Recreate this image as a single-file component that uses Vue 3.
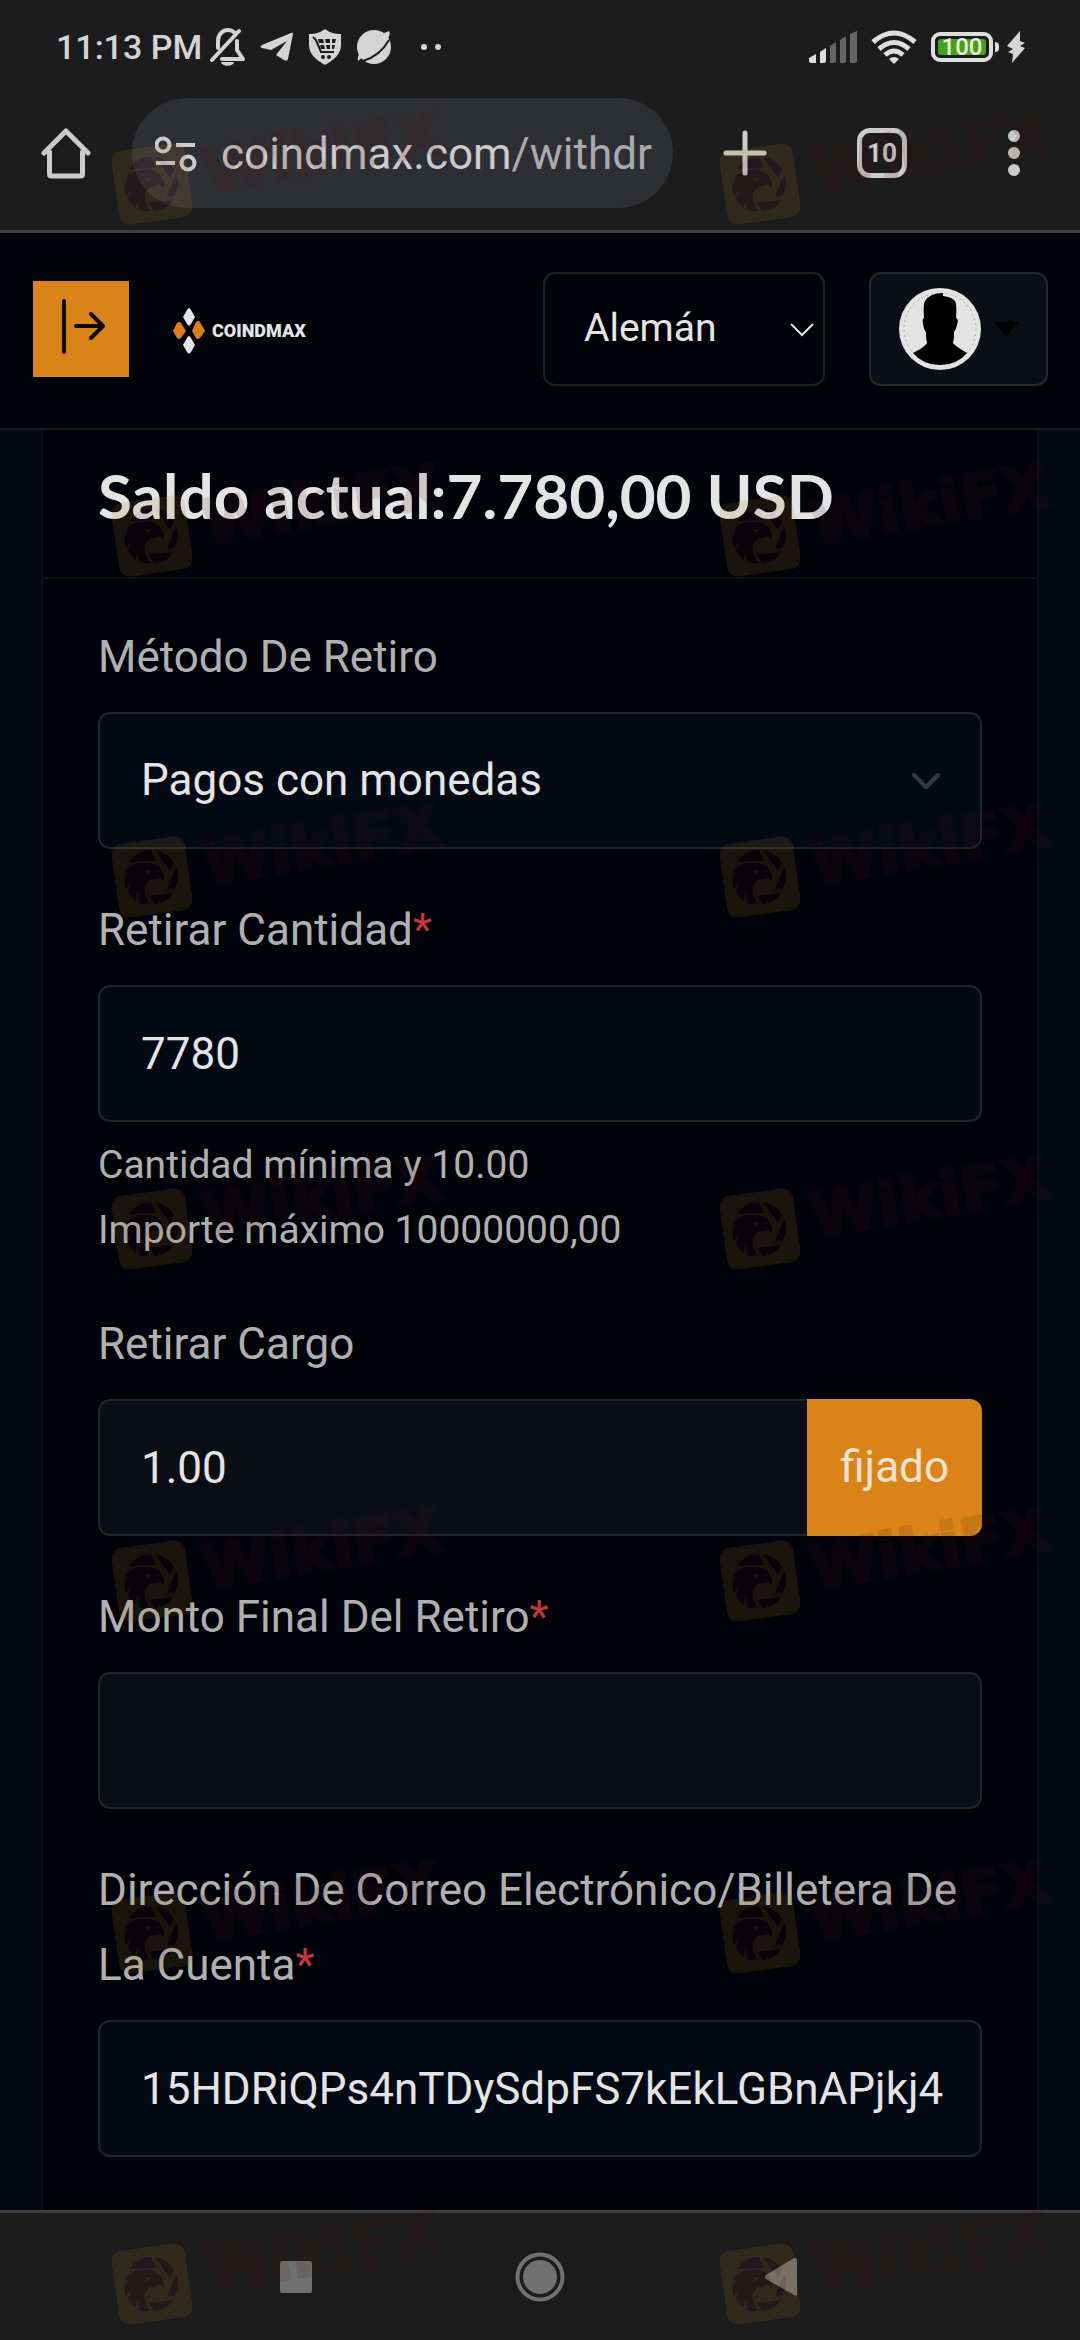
<script setup>
import { ref } from 'vue'

const language = ref('Alemán')
const method = ref('Pagos con monedas')
const amount = ref('7780')
const charge = ref('1.00')
const finalAmount = ref('')
const address = ref('15HDRiQPs4nTDySdpFS7kEkLGBnAPjkj4')

const stamps = [110, 462, 803, 1155, 1507, 1859, 2210].flatMap((y) => [
  { x: 112, y },
  { x: 720, y },
])
</script>

<template>
  <div class="screen">
    <div class="status">
      <span class="clock">11:13 PM</span>
      <svg class="s-bell" width="36" height="38" viewBox="0 0 36 38" fill="none" stroke="#d4d4d4" stroke-width="4" stroke-linecap="round" stroke-linejoin="round">
        <path d="M2 32 29 3" />
        <path d="M8 20V13C8 6 13 2 18 2c3 0 5 1 7 3M27 13v9l6 9H12" />
        <path d="M11 34h13c-1 5-12 5-13 0z" fill="#d4d4d4" stroke="none" />
      </svg>
      <svg width="34" height="30" viewBox="0 0 34 30"><path d="M2 13 31 1q2-1 2 1l-5 25q-1 3-4 1l-8-5 11-14L11 18 2 16q-3-1 0-3z" fill="#d4d4d4" /></svg>
      <svg width="34" height="38" viewBox="0 0 34 38">
        <path d="M17 1c5 4 10 5 16 5v11c0 9-7 15-16 20C8 32 1 26 1 17V6C7 6 12 5 17 1z" fill="#d4d4d4" />
        <path d="M5 9l3 3 5 12h13" fill="none" stroke="#1c1c1c" stroke-width="2" />
        <path d="M10 11h5l1 4h-5zM17 11h5v4h-4zM24 11h4l-1 4h-3zM12 17h4l1 4h-4zM18 17h4v4h-3zM24 17h3l-1 4h-2z" fill="#1c1c1c" />
        <circle cx="15" cy="29" r="2" fill="#1c1c1c" /><circle cx="21" cy="29" r="2" fill="#1c1c1c" />
      </svg>
      <svg width="36" height="38" viewBox="0 0 36 38">
        <circle cx="18" cy="19" r="17" fill="#d4d4d4" />
        <path d="M26 6 33 3q2 3-2 9zM8 28l-6 5q-1-4 2-9z" fill="#d4d4d4" />
        <path d="M33 12Q24 28 7 33" fill="none" stroke="#1c1c1c" stroke-width="2" />
      </svg>
      <svg class="s-more" width="22" height="8" viewBox="0 0 22 8" fill="#d4d4d4"><circle cx="4" cy="4" r="3" /><circle cx="18" cy="4" r="3" /></svg>
      <span class="spring"></span>
      <svg width="48" height="32" viewBox="0 0 48 32">
        <path d="M0 27l7-4v9H2q-2 0-2-2zM11 21l6-4v13q0 2-2 2h-4z" fill="#dedede" />
        <path d="M21 15l6-4v19q0 2-2 2h-4zM31 9l6-4v25q0 2-2 2h-4zM41 3l7-3v30q0 2-2 2h-5z" fill="#666" />
      </svg>
      <svg width="46" height="34" viewBox="0 0 46 34" fill="none" stroke="#dedede" stroke-width="5">
        <path d="M2 12Q23-6 44 12M8 19q15-13 30 0M14 25q9-8 18 0" />
        <path d="M18 29q5-4 10 0l-5 5z" fill="#dedede" stroke="none" />
      </svg>
      <div class="power">
        <span class="battery"><span class="level">100</span></span>
        <span class="cap"></span>
        <svg width="18" height="32" viewBox="0 0 18 32"><path d="M13 0 0 15l6 3-5 3 5 2-1 9 13-15-5-2 5-3-5-2z" fill="#d4d4d4" /></svg>
      </div>
    </div>

    <div class="toolbar">
      <button class="icon" aria-label="Inicio">
        <svg width="50" height="52" viewBox="0 0 50 52" fill="none" stroke="#cbcbcb" stroke-width="5" stroke-linecap="round" stroke-linejoin="round"><path d="M3 26 25 4 47 26M8.500 25v22q0 2 2 2h29q2 0 2-2V25" /></svg>
      </button>
      <button class="url">
        <svg width="42" height="36" viewBox="0 0 42 36" fill="none" stroke="#cbcbcb" stroke-width="4"><circle cx="8" cy="9" r="6.500" /><path d="M21 9h19M1 27h19" /><circle cx="33" cy="27" r="6.500" /></svg>
        <span>coindmax.com<span class="path">/withdr</span></span>
      </button>
      <button class="icon" aria-label="Nueva pestaña">
        <svg width="44" height="46" viewBox="0 0 44 46" stroke="#cbcbcb" stroke-width="5" stroke-linecap="round"><path d="M22 3v40M3 23h38" /></svg>
      </button>
      <button class="tabs">10</button>
      <button class="icon" aria-label="Menú">
        <svg width="12" height="46" viewBox="0 0 12 46" fill="#cbcbcb"><circle cx="6" cy="6" r="6" /><circle cx="6" cy="23" r="6" /><circle cx="6" cy="40" r="6" /></svg>
      </button>
    </div>

    <header class="site">
      <button class="side" aria-label="Abrir menú">
        <svg width="96" height="96" viewBox="0 0 96 96" fill="none" stroke="#0b0705" stroke-width="4" stroke-linecap="round" stroke-linejoin="round"><path d="M31 20v51M43 45h27M58 33l12 12-12 12" /></svg>
      </button>
      <a class="brand" href="#">
        <svg width="32" height="46" viewBox="0 0 32 46">
          <path d="M16 0q1 0 2 2l4 7-4 7q-2 3-4 0l-4-7 4-7q1-2 2-2zM16 28q1 0 2 2l4 7-4 7q-2 3-4 0l-4-7 4-7q1-2 2-2z" fill="#e2e4e8" />
          <path d="M6 14q1 0 2 1l5 8-5 7q-2 2-4 0l-4-7 4-8q1-1 2-1zM25 13q1 0 2 1l5 9-5 7q-2 2-4 0l-4-7 4-9q1-1 2-1z" fill="#df7d1b" />
        </svg>
        <span>COINDMAX</span>
      </a>
      <div class="lang">
        <select v-model="language" aria-label="Idioma"><option>Alemán</option></select>
        <svg width="24" height="14" viewBox="0 0 24 14" fill="none" stroke="#e4e4e4" stroke-width="2"><path d="M1 1l11 11L23 1" /></svg>
      </div>
      <button class="user" aria-label="Cuenta">
        <svg width="82" height="82" viewBox="0 0 82 82">
          <circle cx="41" cy="41" r="41" fill="#e3e3e3" />
          <circle cx="41" cy="41" r="36" fill="none" stroke="#aaa" stroke-width="1" stroke-dasharray="2 3" />
          <path d="M44 5v3q9 1 12 5 2 3 1 17 3 1 1 7-1 5-3 7v5l-1 6q2 3 14 10Q58 77 41 77T14 65q12-6 14-10l-1-6v-5q-2-2-3-8-1-5 1-6-1-14 1-17 5-8 18-8z" fill="#000" />
        </svg>
        <svg width="26" height="14" viewBox="0 0 26 14"><path d="M0 0h26L13 14z" fill="#000" /></svg>
      </button>
    </header>

    <main>
      <section class="card">
        <h1>Saldo actual:7.780,00 USD</h1>
        <form @submit.prevent>
          <div class="field">
            <label for="method">Método De Retiro</label>
            <div class="choice">
              <select id="method" v-model="method" class="box"><option>Pagos con monedas</option></select>
              <svg width="30" height="18" viewBox="0 0 30 18" fill="none" stroke="#343a41" stroke-width="4" stroke-linecap="round" stroke-linejoin="round"><path d="M3 3l12 12L27 3" /></svg>
            </div>
          </div>
          <div class="field">
            <label for="amount">Retirar Cantidad<i>*</i></label>
            <input id="amount" v-model="amount" class="box" type="text">
            <p class="hint">Cantidad mínima y 10.00<br>Importe máximo 10000000,00</p>
          </div>
          <div class="field">
            <label for="charge">Retirar Cargo</label>
            <div class="group">
              <input id="charge" v-model="charge" class="box locked" type="text" readonly>
              <span class="addon">fijado</span>
            </div>
          </div>
          <div class="field">
            <label for="final">Monto Final Del Retiro<i>*</i></label>
            <input id="final" v-model="finalAmount" class="box locked" type="text" readonly>
          </div>
          <div class="field">
            <label for="address">Dirección De Correo Electrónico/Billetera De La Cuenta<i>*</i></label>
            <input id="address" v-model="address" class="box" type="text">
          </div>
        </form>
      </section>
    </main>

    <nav class="system">
      <button class="icon" aria-label="Recientes"><svg width="50" height="50" viewBox="0 0 50 50"><rect x="9" y="9" width="32" height="32" rx="2" fill="#707070" /></svg></button>
      <button class="icon" aria-label="Inicio"><svg width="50" height="50" viewBox="0 0 50 50"><circle cx="25" cy="25" r="22.500" fill="none" stroke="#707070" stroke-width="4" /><circle cx="25" cy="25" r="17" fill="#707070" /></svg></button>
      <button class="icon" aria-label="Atrás"><svg width="50" height="50" viewBox="0 0 50 50"><path d="M38 8v34q0 3-3 1L7 27q-2-2 0-4L35 6q3-1 3 2z" fill="#707070" /></svg></button>
    </nav>

    <svg class="stamp" width="0" height="0" aria-hidden="true">
      <defs>
        <g id="eagle">
          <path d="M17 25Q25 13 39 13l5 11zM43 13q13 2 19 13l-4 8zM64 30q5 11-2 22l-7 1zM61 56Q54 67 42 67l-5-8z" />
          <path d="M17 30q3-2 7-2l-2-1q10-2 17-1 4 1 6 3 6 3 7 11 0 3-1 4-1-3-4-3l-8 2q-6 3-6 8-1 4 1 9l4 7q-6 1-11-1-2-7 0-11-4 4-3 9-7-5-8-10l3-8-5 6q-3-7 0-13l2-3-3 2z" />
        </g>
        <mask id="tile" maskUnits="userSpaceOnUse" x="-5" y="-5" width="95" height="95">
          <rect x="-5" y="-5" width="95" height="95" fill="#fff" />
          <use href="#eagle" fill="#000" />
          <path d="M32 33l7 1-3 3z" fill="#fff" />
        </mask>
      </defs>
    </svg>
    <svg v-for="(s, n) in stamps" :key="n" class="stamp" :style="{ left: s.x + 'px', top: s.y + 'px' }" width="340" height="120" viewBox="0 0 340 120" aria-hidden="true">
      <g transform="translate(0 34)">
        <g mask="url(#tile)">
          <rect x="3" y="3" width="74" height="74" rx="10" transform="rotate(-8 40 40)" fill="#a88223" fill-opacity="0.15" />
        </g>
        <use href="#eagle" fill="#4a1414" fill-opacity="0.12" />
      </g>
      <text x="94" y="83" transform="rotate(-9.500 94 83)">WikiFX</text>
    </svg>
  </div>
</template>

<style>
body {
  margin: 0;
  background: #030a14;
}
</style>

<style scoped>
* {
  box-sizing: border-box;
}

.screen {
  position: relative;
  display: flex;
  flex-direction: column;
  min-height: 100vh;
  overflow: hidden;
  background: #030a14;
  color: #b0b0b0;
  font-family: Roboto, "Noto Sans", sans-serif;
  font-size: 44px;
  line-height: 75px;
}

button,
input,
select {
  margin: 0;
  border: 0;
  font: inherit;
  color: inherit;
  background: none;
}

svg {
  display: block;
  flex: none;
}

.status {
  display: flex;
  align-items: center;
  height: 98px;
  padding: 0 55px 4px 56px;
  gap: 14px;
  background: #1c1c1c;
  color: #d4d4d4;
}

.clock {
  font-size: 34px;
  font-weight: 500;
  line-height: 40px;
}

.s-bell {
  margin-left: -6px;
}

.s-more {
  margin-left: 14px;
}

.spring {
  flex: 1;
}

.power {
  display: flex;
  align-items: center;
}

.battery {
  display: flex;
  width: 62px;
  height: 30px;
  padding: 3px;
  border: 4px solid #dedede;
  border-radius: 9px;
}

.level {
  flex: 1;
  border-radius: 3px;
  background: #47a01a;
  color: #e2efdc;
  font-size: 24px;
  font-weight: 500;
  line-height: 17px;
  text-align: center;
}

.cap {
  width: 4px;
  height: 10px;
  margin: 0 8px 0 2px;
  border-radius: 0 4px 4px 0;
  background: #dedede;
}

.toolbar {
  display: flex;
  align-items: center;
  padding: 0 60px 22px 41px;
  background: #1c1c1c;
  border-bottom: 3px solid #3e3e3e;
}

.icon {
  padding: 0;
}

.url {
  display: flex;
  flex: 1;
  align-items: center;
  gap: 24px;
  min-width: 0;
  height: 110px;
  margin: 0 50px 0 41px;
  padding: 2px 0 0 23px;
  border-radius: 55px;
  background: #2e2f33;
  color: #cbcbcb;
  white-space: nowrap;
}

.path {
  color: #a9abab;
}

.tabs {
  width: 50px;
  height: 50px;
  margin: 0 101px 0 90px;
  padding: 0;
  border: 5px solid #cbcbcb;
  border-radius: 13px;
  color: #cbcbcb;
  font-size: 26px;
  font-weight: 700;
  line-height: 40px;
}

.site {
  display: flex;
  align-items: center;
  height: 197px;
  padding: 0 32px 4px 33px;
  border-bottom: 2px solid #171a1f;
  background: #01030a;
}

.side {
  width: 96px;
  height: 96px;
  padding: 0;
  background: #da8317;
}

.brand {
  display: flex;
  flex: 1;
  align-items: center;
  gap: 7px;
  margin: 4px 0 0 44px;
  color: #e2e4e8;
  font-size: 18px;
  font-weight: 900;
  line-height: 26px;
  text-decoration: none;
}

.lang,
.choice {
  position: relative;
}

.lang select {
  display: block;
  width: 282px;
  height: 114px;
  padding: 0 39px;
  border: 2px solid #1d2026;
  border-radius: 12px;
  appearance: none;
  color: #e4e4e4;
  font-size: 39px;
}

.lang svg {
  position: absolute;
  top: 51px;
  right: 11px;
  pointer-events: none;
}

.user {
  display: flex;
  align-items: center;
  gap: 12px;
  height: 114px;
  margin-left: 44px;
  padding: 0 27px 0 28px;
  border: 2px solid #25292e;
  border-radius: 12px;
  background: #0b0f15;
}

main {
  flex: 1;
  display: flex;
  flex-direction: column;
  padding: 0 41px;
}

.card {
  flex: 1;
  padding-bottom: 53px;
  border: solid #0b0f15;
  border-width: 0 2px;
  background: #01030a;
}

h1 {
  margin: 0;
  padding: 28px 55px 44px;
  border-bottom: 2px solid #0d1116;
  color: #e4e4e4;
  font-family: Lato, "Open Sans", sans-serif;
  font-size: 62px;
  font-weight: 700;
  line-height: 75px;
  white-space: nowrap;
}

form {
  display: flex;
  flex-direction: column;
  gap: 44px;
  padding: 41px 55px 0;
}

label {
  display: block;
  margin-bottom: 17px;
}

i {
  color: #c9353f;
  font-style: normal;
}

.box {
  display: block;
  width: 100%;
  height: 137px;
  padding: 0 36px 0 41px;
  border: 2px solid #20252b;
  border-radius: 12px;
  outline: 0;
  appearance: none;
  background: #030a14;
  color: #e4e4e4;
}

.choice svg {
  position: absolute;
  top: 60px;
  right: 41px;
  pointer-events: none;
}

.hint {
  margin: 11px 0 0;
  font-size: 39px;
  line-height: 65px;
}

.locked {
  background: #0b0f15;
}

.group {
  display: flex;
}

.group .box {
  flex: 1;
  min-width: 0;
  border-right: 0;
  border-radius: 12px 0 0 12px;
}

.addon {
  display: flex;
  align-items: center;
  padding: 0 33px;
  border-radius: 0 12px 12px 0;
  background: #da8317;
  color: #eee2d3;
}

.system {
  display: flex;
  align-items: center;
  justify-content: center;
  gap: 194px;
  height: 130px;
  border-top: 3px solid #3e3e3e;
  background: #1c1c1c;
}

.stamp {
  position: absolute;
  pointer-events: none;
}

.stamp text {
  fill: #4a1414;
  stroke: #4a1414;
  stroke-width: 3px;
  stroke-linejoin: round;
  opacity: 0.13;
  font-family: "DejaVu Sans", sans-serif;
  font-size: 62px;
  font-weight: 700;
}
</style>
